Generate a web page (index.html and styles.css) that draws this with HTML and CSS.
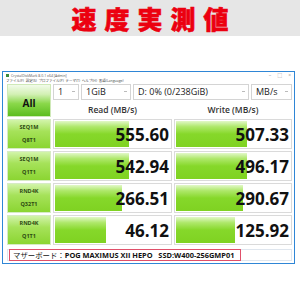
FILE: index.html
```html
<!DOCTYPE html>
<html lang="ja">
<head>
<meta charset="utf-8">
<link rel="stylesheet" href="styles.css">
</head>
<body>
<div class="banner"><h1>速度実測値</h1></div>
<div class="window">
  <div class="titlebar">
    <span class="appicon"></span>
    <span class="ttext">CrystalDiskMark 8.0.1 x64 [Admin]</span>
    <span class="controls"><span>–</span><span>□</span><span>×</span></span>
  </div>
  <div class="menubar">ファイル(F)&nbsp; 設定(S)&nbsp; プロファイル(P)&nbsp; テーマ(T)&nbsp; ヘルプ(H)&nbsp; 言語(Language)</div>
  <div class="grid">
    <div class="all">All</div>
    <div class="selects">
      <div class="sel s1">1<i></i></div>
      <div class="sel s2">1GiB<i></i></div>
      <div class="sel s3">D: 0% (0/238GiB)<i></i></div>
      <div class="sel s4">MB/s<i></i></div>
    </div>
    <div class="head">Read (MB/s)</div>
    <div class="head">Write (MB/s)</div>

    <div class="label">SEQ1M<br>Q8T1</div>
    <div class="val"><div class="bar" style="width:63%"></div><span>555.60</span></div>
    <div class="val"><div class="bar" style="width:61%"></div><span>507.33</span></div>

    <div class="label">SEQ1M<br>Q1T1</div>
    <div class="val"><div class="bar" style="width:63%"></div><span>542.94</span></div>
    <div class="val"><div class="bar" style="width:61%"></div><span>496.17</span></div>

    <div class="label">RND4K<br>Q32T1</div>
    <div class="val"><div class="bar" style="width:57%"></div><span>266.51</span></div>
    <div class="val"><div class="bar" style="width:58%"></div><span>290.67</span></div>

    <div class="label">RND4K<br>Q1T1</div>
    <div class="val"><div class="bar" style="width:44%"></div><span>46.12</span></div>
    <div class="val"><div class="bar" style="width:51%"></div><span>125.92</span></div>

    <div class="comment"><span class="note">マザーボード：<b>POG MAXIMUS XII HEPO&nbsp;&nbsp; SSD:W400-256GMP01</b></span></div>
  </div>
</div>
</body>
</html>
```
FILE: styles.css
```css
body {
  margin: 0;
  width: 300px;
  height: 300px;
  overflow: hidden;
  background: #fff;
  font-family: "Open Sans", "Noto Sans CJK JP", sans-serif;
  color: #222;
}
.banner {
  height: 36px;
  background: #e6e6e6;
  display: flex;
  align-items: center;
  justify-content: center;
}
.banner h1 {
  margin: 0;
  padding-left: 8px;
  font-family: "Noto Sans CJK JP", sans-serif;
  font-weight: 900;
  font-size: 25px;
  line-height: 1;
  letter-spacing: 8px;
  color: #ec0010;
  -webkit-text-stroke: 0.6px #ec0010;
}
.window {
  margin: 35px 0 0 2px;
  width: 291px;
  border: 1px solid #2f86d6;
  background: #fff;
}
.titlebar {
  height: 7px;
  display: flex;
  align-items: center;
  padding: 0 3px 0 3px;
  font-size: 3.5px;
  line-height: 1;
  color: #555;
}
.appicon {
  width: 3px;
  height: 3px;
  background: #3a8a3a;
  margin-right: 2px;
}
.ttext { flex: 1; }
.controls {
  display: flex;
  gap: 6px;
  color: #999;
  font-size: 5px;
}
.menubar {
  height: 4px;
  padding-left: 3px;
  font-size: 3.5px;
  line-height: 4px;
  color: #444;
  white-space: nowrap;
}
.grid {
  display: grid;
  grid-template-columns: 44px 119px 118px;
  grid-template-rows: 16px 15px 30px 30px 30px 30px 14px;
  column-gap: 2px;
  row-gap: 2px;
  padding: 1px 2px 2px 4px;
}
.all {
  grid-row: 1 / 3;
  display: flex;
  align-items: flex-end;
  justify-content: center;
  padding-bottom: 6px;
  box-sizing: border-box;
  font-weight: 700;
  font-size: 10px;
  color: #111;
  background: linear-gradient(to bottom, #f2fbea 0%, #d2f0b4 30%, #8ad84a 60%, #5cbd1e 100%);
  border: 1px solid #cfe9b8;
}
.selects {
  grid-column: 2 / 4;
  display: flex;
  gap: 2px;
}
.sel {
  position: relative;
  box-sizing: border-box;
  border: 1px solid #d4d4d4;
  background: #fff;
  font-size: 9px;
  line-height: 14px;
  padding-left: 4px;
  color: #222;
}
.sel i {
  position: absolute;
  right: 3px;
  top: 6px;
  width: 3px;
  height: 1px;
  background: #bbb;
}
.s1 { width: 26px; }
.s2 { width: 50px; }
.s3 { width: 116px; }
.s4 { flex: 1; }
.head {
  display: flex;
  align-items: center;
  justify-content: center;
  font-size: 8.5px;
  font-weight: 600;
  color: #333;
}
.label {
  display: flex;
  align-items: center;
  justify-content: center;
  text-align: center;
  font-size: 5.5px;
  font-weight: 700;
  line-height: 13px;
  color: #2d4a12;
  background: linear-gradient(to bottom, #d2f4aa 0%, #a6e25a 40%, #8bd532 100%);
  border: 1px solid #d6ebc4;
  box-sizing: border-box;
}
.val {
  position: relative;
  box-sizing: border-box;
  border: 1px solid #dadada;
  background: #fff;
  display: flex;
  align-items: center;
  justify-content: flex-end;
  padding-right: 2px;
}
.bar {
  position: absolute;
  left: 1px;
  top: 1px;
  bottom: 1px;
  background: linear-gradient(to bottom, #e2f8c8 0%, #aee86a 22%, #86d82a 50%, #7fd222 100%);
}
.val span {
  position: relative;
  font-weight: 700;
  font-size: 17px;
  line-height: 1;
  color: #111;
}
.comment {
  grid-column: 1 / 4;
  margin-top: 2px;
  border: 1px solid #dfe6ee;
  box-sizing: border-box;
  display: flex;
  align-items: center;
  padding-left: 1px;
}
.note {
  border: 1px solid #e0506a;
  font-size: 7.4px;
  line-height: 10px;
  padding: 0 6px 0 3px;
  color: #111;
  white-space: nowrap;
}
.note b { font-weight: 700; }
```
